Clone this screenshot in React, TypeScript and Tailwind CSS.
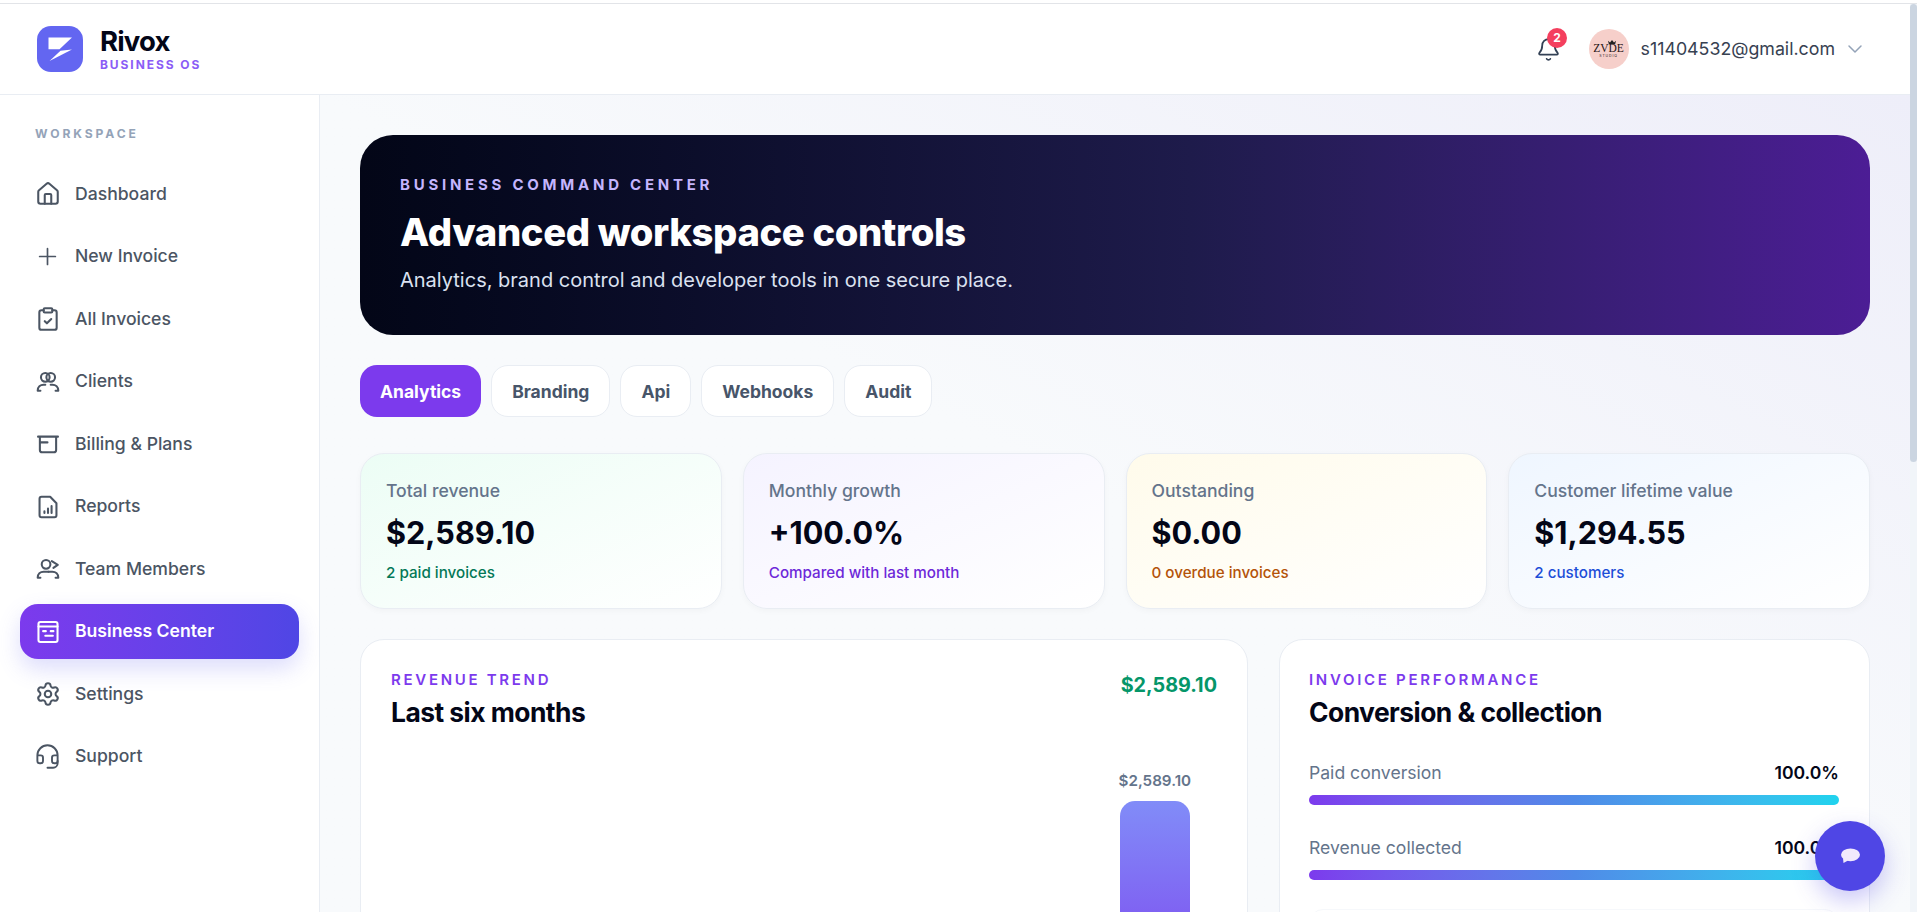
import { Bell, ChevronDown, ClipboardCheck, Headset, House, Plus, Settings } from "lucide-react";
import type { ReactNode } from "react";

function ClientsIcon() {
  return (
    <svg viewBox="0 0 24 24" className="h-[26px] w-[26px]" fill="none" stroke="currentColor" strokeWidth="1.9" strokeLinecap="round" strokeLinejoin="round">
      <circle cx="9.5" cy="7.7" r="4" />
      <circle cx="14.5" cy="7.7" r="4" />
      <path d="M5 20H2.5c0-3.3 2.4-5.5 5.5-5.5h1.5" />
      <path d="M19 20h2.5c0-3.3-2.4-5.5-5.5-5.5h-1.5" />
    </svg>
  );
}

function BillingIcon() {
  return (
    <svg viewBox="0 0 24 24" className="h-[26px] w-[26px]" fill="none" stroke="currentColor" strokeWidth="1.9" strokeLinecap="round" strokeLinejoin="round">
      <path d="M2.8 5.2h18.4" />
      <path d="M4.5 5.5v12a2.2 2.2 0 0 0 2.2 2.2h10.6a2.2 2.2 0 0 0 2.2-2.2v-12" />
      <path d="M5 10.5h6.5" />
    </svg>
  );
}

function ReportIcon() {
  return (
    <svg viewBox="0 0 24 24" className="h-[26px] w-[26px]" fill="none" stroke="currentColor" strokeWidth="1.9" strokeLinecap="round" strokeLinejoin="round">
      <path d="M14 2.5H6a1.8 1.8 0 0 0-1.8 1.8v15.4A1.8 1.8 0 0 0 6 21.5h12a1.8 1.8 0 0 0 1.8-1.8V8.5z" />
      <path d="M8.7 17.5v-1.5M12 17.5v-4M15.3 17.5v-6.5" />
    </svg>
  );
}

function TeamIcon() {
  return (
    <svg viewBox="0 0 24 24" className="h-[26px] w-[26px]" fill="none" stroke="currentColor" strokeWidth="1.9" strokeLinecap="round" strokeLinejoin="round">
      <circle cx="10.2" cy="7.7" r="4" />
      <path d="M5 20H2.5c0-3.3 2.4-5.5 5.5-5.5h4.5" />
      <path d="M19 20h2.5c0-3.3-2.4-5.5-5.5-5.5h-3.5" />
      <path d="M15.5 4.8l5.5 3.4-4 2.8" />
    </svg>
  );
}

function CenterIcon() {
  return (
    <svg viewBox="0 0 24 24" className="h-[26px] w-[26px]" fill="none" stroke="currentColor" strokeWidth="1.9" strokeLinecap="round" strokeLinejoin="round">
      <rect x="3.2" y="2.8" width="17.6" height="18.4" rx="1.8" />
      <path d="M3.2 7h17.6M7.5 11.2h2.5M14.5 11.2h2.5M9.5 15.5h7" />
    </svg>
  );
}

const navItems: { label: string; icon: ReactNode; active?: boolean }[] = [
  { label: "Dashboard", icon: <House className="h-[26px] w-[26px]" strokeWidth={1.9} /> },
  { label: "New Invoice", icon: <Plus className="h-[31px] w-[31px]" strokeWidth={1.5} /> },
  { label: "All Invoices", icon: <ClipboardCheck className="h-[26px] w-[26px]" strokeWidth={1.9} /> },
  { label: "Clients", icon: <ClientsIcon /> },
  { label: "Billing & Plans", icon: <BillingIcon /> },
  { label: "Reports", icon: <ReportIcon /> },
  { label: "Team Members", icon: <TeamIcon /> },
  { label: "Business Center", icon: <CenterIcon />, active: true },
  { label: "Settings", icon: <Settings className="h-[26px] w-[26px]" strokeWidth={1.9} /> },
  { label: "Support", icon: <Headset className="h-[29px] w-[29px]" strokeWidth={1.7} /> },
];

const tabs = ["Analytics", "Branding", "Api", "Webhooks", "Audit"];

const stats = [
  { label: "Total revenue", value: "$2,589.10", note: "2 paid invoices", card: "from-[#ecfdf5]", noteColor: "text-[#047857]" },
  { label: "Monthly growth", value: "+100.0%", note: "Compared with last month", card: "from-[#f5f3ff]", noteColor: "text-[#6d28d9]" },
  { label: "Outstanding", value: "$0.00", note: "0 overdue invoices", card: "from-[#fffbeb]", noteColor: "text-[#b45309]" },
  { label: "Customer lifetime value", value: "$1,294.55", note: "2 customers", card: "from-[#eff6ff]", noteColor: "text-[#1d4ed8]" },
];

const progress = [
  { label: "Paid conversion", value: "100.0%" },
  { label: "Revenue collected", value: "100.0%" },
];

function Sidebar() {
  return (
    <aside className="flex w-[320px] shrink-0 flex-col border-r border-[#e9edf3] bg-white px-[20px] pt-[29px]">
      <p className="mb-[22px] pl-[15px] text-[12.1px] font-bold leading-[20px] tracking-[0.24em] text-[#94a3b8]">WORKSPACE</p>
      <nav className="flex flex-col gap-[7.5px]">
        {navItems.map((item) => (
          <div
            key={item.label}
            className={
              item.active
                ? "flex h-[55px] items-center gap-[14px] rounded-[18px] bg-gradient-to-r from-[#7c3aed] to-[#4f46e5] pl-[14px] pt-[1px] text-[17.6px] font-semibold text-white shadow-[0_10px_22px_rgba(99,102,241,0.22)]"
                : "flex h-[55px] items-center gap-[14px] rounded-[18px] pl-[14px] pt-[1px] text-[17.6px] font-[550] text-[#4b5563]"
            }
          >
            <span className="flex w-[27px] shrink-0 justify-center">{item.icon}</span>
            {item.label}
          </div>
        ))}
      </nav>
    </aside>
  );
}

function Header() {
  return (
    <header className="flex h-[91px] shrink-0 items-center justify-between border-b border-[#e9edf3] bg-white pl-[37px] pr-[43px]">
      <div className="flex items-center gap-[17px]">
        <div className="flex h-[46px] w-[46px] items-center justify-center rounded-[14px] bg-[#6366f1]">
          <svg viewBox="0 0 46 46" className="h-[46px] w-[46px]" fill="#fff">
            <path d="M11.5 11.5H35L22.5 23.3H11.5z" />
            <path d="M35 23.6 12.5 35 23.5 24.8z" />
          </svg>
        </div>
        <div className="flex flex-col">
          <span className="text-[27.5px] font-bold leading-[30px] tracking-[-0.03em] text-[#030617]">Rivox</span>
          <span className="mt-[1px] text-[12px] font-bold leading-[16px] tracking-[0.16em] text-[#8b5cf6]">BUSINESS OS</span>
        </div>
      </div>
      <div className="flex items-center">
        <div className="relative mr-[27.5px] text-[#334155]">
          <Bell className="h-[25px] w-[25px]" strokeWidth={1.7} />
          <span className="absolute -right-[6px] -top-[9px] flex h-[20px] w-[20px] items-center justify-center rounded-full bg-[#f43f5e] text-[12px] font-bold text-white">
            2
          </span>
        </div>
        <div className="mr-[12px] flex h-[40px] w-[40px] flex-col items-center justify-center rounded-full bg-[#f6cfca] text-[#1f1416]">
          <svg viewBox="0 0 10 5" className="-mb-[1px] ml-[6px] h-[4px] w-[8px]" fill="#222">
            <path d="M1 5 0 1l2.5 2L5 0l2.5 3L10 1 9 5z" />
          </svg>
          <span className="text-[11.5px] leading-[11px] [font-family:'Liberation_Serif',serif]">ZVDE</span>
          <span className="text-[3.5px] leading-[5px] tracking-[0.25em]">STUDIO</span>
        </div>
        <span className="pt-[1px] text-[17.8px] text-[#374151]">s11404532@gmail.com</span>
        <ChevronDown className="ml-[8px] h-[24px] w-[24px] text-[#94a3b8]" strokeWidth={1.5} />
      </div>
    </header>
  );
}

function StatCards() {
  return (
    <div className="mt-[36px] grid grid-cols-4 gap-[21px]">
      {stats.map((s) => (
        <div
          key={s.label}
          className={`h-[156px] rounded-[24px] border border-[#e9edf3] bg-gradient-to-br ${s.card} to-white px-[25px] pt-[24px] shadow-[0_2px_6px_rgba(15,23,42,0.03)]`}
        >
          <p className="text-[17.6px] font-medium leading-[26px] text-[#64748b]">{s.label}</p>
          <p className="mt-[7px] text-[30.6px] font-bold leading-[44px] text-[#030617]">{s.value}</p>
          <p className={`mt-[8px] text-[15.2px] font-[550] leading-[20px] ${s.noteColor}`}>{s.note}</p>
        </div>
      ))}
    </div>
  );
}

function RevenueCard() {
  return (
    <section className="h-[320px] rounded-t-[24px] border border-[#e9edf3] bg-white px-[30px] pt-[30px]">
      <div className="flex items-start justify-between">
        <div>
          <p className="text-[15px] font-semibold leading-[20px] tracking-[0.18em] text-[#7c3aed]">REVENUE TREND</p>
          <h2 className="mt-[6px] text-[26.4px] font-bold leading-[32px] tracking-[-0.02em] text-[#030617]">Last six months</h2>
        </div>
        <p className="text-[19.8px] font-bold leading-[30px] text-[#059669]">$2,589.10</p>
      </div>
      <div className="mt-[42.5px] grid grid-cols-6 gap-[16px]">
        {[0, 1, 2, 3, 4].map((n) => (
          <div key={n} />
        ))}
        <div className="flex flex-col items-center">
          <span className="text-[15.2px] font-semibold leading-[20px] text-[#64748b]">$2,589.10</span>
          <div className="mt-[10px] h-[200px] w-[70px] rounded-t-[15px] bg-gradient-to-b from-[#818cf8] to-[#7c3aed]" />
        </div>
      </div>
    </section>
  );
}

function PerformanceCard() {
  return (
    <section className="h-[320px] rounded-t-[24px] border border-[#e9edf3] bg-white pl-[29px] pr-[30px] pt-[30px]">
      <p className="text-[15px] font-semibold leading-[20px] tracking-[0.18em] text-[#7c3aed]">INVOICE PERFORMANCE</p>
      <h2 className="mt-[6px] text-[26.4px] font-bold leading-[32px] tracking-[-0.02em] text-[#030617]">Conversion &amp; collection</h2>
      <div className="mt-[32px] flex flex-col gap-[29.5px]">
        {progress.map((p) => (
          <div key={p.label}>
            <div className="flex items-center justify-between">
              <span className="text-[17.6px] leading-[26px] text-[#64748b]">{p.label}</span>
              <span className="text-[17.6px] font-semibold leading-[26px] text-[#030617]">{p.value}</span>
            </div>
            <div className="mt-[9px] h-[10px] rounded-full bg-gradient-to-r from-[#7c3aed] via-[#4f8ae8] to-[#1fd3ee]" />
          </div>
        ))}
        <div className="h-[60px] rounded-[14px] border border-[#f6f8fb]" />
      </div>
    </section>
  );
}

export default function App() {
  return (
    <div className="relative h-[912px] w-full overflow-hidden bg-white [font-family:Inter,sans-serif]">
      <div className="h-[4px] border-b border-[#e2e4e8] bg-white" />
      <div className="flex h-[908px]">
        <div className="flex min-w-0 flex-1 flex-col">
          <Header />
          <div className="flex min-h-0 flex-1">
            <Sidebar />
            <main className="min-w-0 flex-1 overflow-hidden bg-gradient-to-tr from-[#f8fafc] via-[#f8fafc] to-[#eeeef9] px-[40px] pt-[40px]">
              <section className="flex h-[200px] flex-col rounded-[33px] bg-gradient-to-r from-[#030617] via-[#1e1b4b] via-55% to-[#4c1d95] pl-[40px] pt-[40px]">
                <p className="text-[15px] font-bold leading-[20px] tracking-[0.25em] text-[#c4b5fd]">BUSINESS COMMAND CENTER</p>
                <h1 className="mt-[12px] text-[38.2px] font-extrabold leading-[50px] tracking-[-0.01em] text-white">Advanced workspace controls</h1>
                <p className="mt-[8px] text-[20px] leading-[30px] text-[#dbe1f0]">Analytics, brand control and developer tools in one secure place.</p>
              </section>
              <div className="mt-[30px] flex gap-[10px]">
                {tabs.map((t, i) => (
                  <button
                    key={t}
                    className={
                      i === 0
                        ? "h-[52px] rounded-[17px] bg-[#7c3aed] px-[20px] pt-[2px] text-[17.5px] font-bold text-white"
                        : "h-[52px] rounded-[17px] border border-[#e9edf3] bg-white px-[20px] pt-[2px] text-[17.5px] font-bold text-[#475569]"
                    }
                  >
                    {t}
                  </button>
                ))}
              </div>
              <StatCards />
              <div className="mt-[30px] grid grid-cols-[888px_1fr] gap-[31px]">
                <RevenueCard />
                <PerformanceCard />
              </div>
            </main>
          </div>
        </div>
        <div className="w-[7px] shrink-0 bg-[#f1f5f9]">
          <div className="h-[458px] rounded-full bg-[#cbd5e1]" />
        </div>
      </div>
      <button className="absolute left-[1815px] top-[821px] flex h-[70px] w-[70px] items-center justify-center rounded-full bg-[#4f46e5] shadow-[0_10px_25px_rgba(79,70,229,0.3)]">
        <svg viewBox="0 0 20 16" className="h-[16px] w-[20px]">
          <ellipse cx="10.5" cy="6.8" rx="9.5" ry="6.4" fill="#f1eafc" />
          <path d="M3 10l5 2.5-4.5 2.5z" fill="#f1eafc" />
        </svg>
      </button>
    </div>
  );
}
